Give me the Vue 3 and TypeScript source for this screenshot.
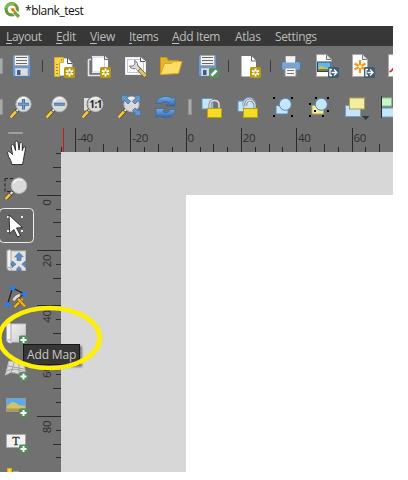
<script setup lang="ts">
interface MenuEntry {
  key: string
  rest: string
  width: number
  mnemonic: boolean
}

interface Tick {
  pos: number
  size: number
}

const menu: MenuEntry[] = [
  { key: 'L', rest: 'ayout', width: 36, mnemonic: true },
  { key: 'E', rest: 'dit', width: 20, mnemonic: true },
  { key: 'V', rest: 'iew', width: 25, mnemonic: true },
  { key: 'I', rest: 'tems', width: 29, mnemonic: true },
  { key: 'A', rest: 'dd Item', width: 49, mnemonic: true },
  { key: 'A', rest: 'tlas', width: 26, mnemonic: false },
  { key: 'S', rest: 'ettings', width: 42, mnemonic: false },
]

const major = 55.3
const step = major / 4

/* Ticks every 5 mm; long every 20 mm, medium every 10 mm. */
function ticks(zero: number, from: number, to: number): Tick[] {
  const list: Tick[] = []
  for (let i = from; i <= to; i++) {
    const size = i % 4 === 0 ? 24 : i % 2 === 0 ? 8 : 5
    list.push({ pos: Math.floor(zero + i * step + 0.2) + 0.5, size })
  }
  return list
}

const topTicks = ticks(186, -9, 14)
const leftTicks = ticks(43, -3, 19)
const topLabels = [-40, -20, 0, 20, 40, 60].map((v) => ({ v, pos: 187.5 + (v / 20) * major }))
const leftLabels = [0, 20, 40, 60, 80].map((v) => ({ v, pos: 47.5 + (v / 20) * major }))
</script>

<template>
  <div class="window">
    <svg class="defs" width="0" height="0">
      <defs>
        <g id="gold">
          <rect x="18" y="19" width="11" height="11" rx="1.5" fill="#b99a0c" />
          <path d="M23.5 20.5v8M20 22.5l7 4M20 26.5l7-4" stroke="#fff" stroke-width="1.9" />
          <circle cx="23.5" cy="24.5" r="1.2" fill="#b99a0c" />
        </g>
        <g id="plus">
          <rect x="19" y="22" width="9" height="9" rx="1.5" fill="#558a5c" />
          <path d="M23.5 23.5v6M20.5 26.5h6" stroke="#fff" stroke-width="2" />
        </g>
        <g id="export">
          <rect x="20" y="19" width="11" height="11" rx="1.5" fill="#3e5c73" />
          <path d="M24 21.500h-2v6h2M23.500 24.500h5M26 21.500l3 3-3 3" fill="none" stroke="#fff" stroke-width="1.300" />
        </g>
        <g id="disk">
          <path d="M9.500 7.500h18v21H11l-1.500-1.500z" fill="#6e98c9" stroke="#54789f" />
          <rect x="11.500" y="7.500" width="14" height="10" fill="#f2f2f2" stroke="#a3a3a3" stroke-width=".8" />
          <path d="M13 9.500h11M13 12.500h11M13 15.500h11" stroke="#696969" />
          <rect x="12.500" y="20.500" width="12" height="7" fill="#dedede" stroke="#bfcbd9" />
          <rect x="14" y="22" width="3.500" height="5" fill="#3b5f8b" />
        </g>
        <g id="page">
          <path d="M8.500 6.500h10l5 5V28.500h-15z" fill="#fff" stroke="#aaa" />
          <path d="M18.500 7v4.500h4.500" fill="#e2e2e2" stroke="#777" />
        </g>
        <g id="lens">
          <path d="M6.500 28.500l7.500-8" stroke="#4a4330" stroke-width="4" />
          <path d="M6.500 28.500l5.500-6" stroke="#f4c63d" stroke-width="2.600" />
          <path d="M12.500 22l2-2" stroke="#e5e5e5" stroke-width="2" />
          <circle cx="19.500" cy="15.200" r="7.600" fill="#dadada" stroke="#b4b4b4" />
          <path d="M14 13a6 6 0 0 1 9-3" stroke="#f0f0f0" fill="none" stroke-width="2" />
        </g>
        <linearGradient id="blue" x1="0" y1="0" x2="0" y2="1">
          <stop offset="0" stop-color="#78ade7" />
          <stop offset="1" stop-color="#3267ae" />
        </linearGradient>
        <linearGradient id="fade" x1="0" y1="0" x2="1" y2="1">
          <stop offset="0" stop-color="#f3f3f3" />
          <stop offset="1" stop-color="#c9c9c9" />
        </linearGradient>
      </defs>
    </svg>

    <header class="title">
      <svg class="logo" viewBox="0 0 17 17">
        <circle cx="7.700" cy="7.300" r="5.600" fill="none" stroke="#659b35" stroke-width="3.200" />
        <path d="M2.200 6.200a5.600 5.600 0 0 1 8.500-3.600" fill="none" stroke="#83b84e" stroke-width="3" />
        <path d="M8 7.500l6.700 6.700" stroke="#fff" stroke-width="5" />
        <path d="M10 10l5 4.800" stroke="#70a83b" stroke-width="3.200" />
        <path d="M6.500 6.200h3.500l2 4.300-4-1z" fill="#ee7913" />
      </svg>
      <span>*blank_test</span>
    </header>

    <nav class="menu">
      <span v-for="item in menu" :key="item.rest" class="entry" :style="{ width: item.width + 'px' }"><span :class="{ key: item.mnemonic }">{{ item.key }}</span>{{ item.rest }}</span>
    </nav>

    <div class="bar">
      <i class="edge"></i>
      <svg class="icon" viewBox="0 0 36 36"><use href="#disk" /></svg>
      <i class="sep first"></i>
      <svg class="icon" viewBox="0 0 36 36">
        <path d="M9 10.500h12l5 5V27.500H9z" fill="#fff" stroke="#b9c5e1" />
        <path d="M21.500 10v5.500H26" fill="#fff" stroke="#555" />
        <path d="M8.500 9.500h9v5h-4v14h-5z" fill="#f6d34e" stroke="#d8ad22" />
        <path d="M10 16.500h2M10 19.500h2M10 22.500h2M10 25.500h2M15.500 11v2" stroke="#ad8b20" />
        <use href="#gold" />
      </svg>
      <svg class="icon" viewBox="0 0 36 36">
        <path d="M6.500 11.500H9M6.500 11.500v16H20" fill="none" stroke="#e6e6e6" stroke-width="1.600" />
        <path d="M9.500 7.500h13l4 4v14h-17z" fill="#fff" stroke="#777" />
        <path d="M10.500 9h12v15h-12z" fill="#fff" stroke="#c2cceb" />
        <path d="M22.500 7.500v4h4" fill="#eee" stroke="#666" />
        <use href="#gold" />
      </svg>
      <svg class="icon" viewBox="0 0 36 36">
        <path d="M7.500 9.500h15l5 4v13h-20z" fill="#fff" stroke="#eee" />
        <path d="M9.500 11.500h12l4 3v10h-16z" fill="none" stroke="#b9c5e8" />
        <path d="M22.500 9.500v4h4.500" fill="#fff" stroke="#555" />
        <path d="M17 17l5 5.500" stroke="#777" stroke-width="4.500" />
        <path d="M16.500 12.500a4.200 4.200 0 1 1-5 5.500l3.500 0 2-2z" fill="#ddd" stroke="#777" />
        <path d="M16.500 17l5 5.500" stroke="#ddd" stroke-width="2.800" />
        <path d="M21 21.500l7 7" stroke="#7d6c39" stroke-width="4.400" />
        <path d="M21.500 22l6 6" stroke="#e0c565" stroke-width="2.800" />
      </svg>
      <svg class="icon" viewBox="0 0 36 36">
        <path d="M6.500 26V9.500h6l2 3h10v4" fill="#e2b52a" stroke="#c99717" />
        <path d="M6.500 26.500l4-11h7l2-2h8.500l-3.500 12z" fill="#fddc67" stroke="#d8a826" />
      </svg>
      <svg class="icon" viewBox="0 0 36 36">
        <use href="#disk" x="-1" />
        <rect x="19" y="20" width="10" height="10" rx="1.500" fill="#568c5f" />
        <path d="M21.500 27.500l5-5" stroke="#fff" stroke-width="2.600" />
      </svg>
      <i class="sep second"></i>
      <svg class="icon" viewBox="0 0 36 36">
        <path d="M9.500 8h10l4.500 5v15.500H9.500z" fill="#fff" />
        <path d="M19.500 8v5H24" fill="#fff" stroke="#666" />
        <use href="#gold" />
      </svg>
      <i class="sep third"></i>
      <svg class="icon" viewBox="0 0 36 36">
        <rect x="14" y="8.500" width="9" height="7" fill="#f5f5f5" stroke="#c5c5c5" />
        <rect x="9.500" y="13.500" width="19" height="9" rx="2.500" fill="#7ba3d1" stroke="#4f759f" />
        <rect x="14" y="8.500" width="9" height="6" fill="#f3f3f3" />
        <path d="M13 20h11v8.500H13z" fill="#f4f4f4" stroke="#959595" />
        <path d="M15 22.500h7M15 25.500h7" stroke="#777" />
      </svg>
      <svg class="icon" viewBox="0 0 36 36">
        <use href="#page" />
        <rect x="9.500" y="14" width="13.500" height="9.500" fill="#5fb6ee" stroke="#334553" />
        <path d="M10 21q2.500-5 5-2.500 4 2 7.500 1.500v3H10z" fill="#d4bd5b" />
        <path d="M10 22h12.500" stroke="#477746" stroke-width="1.500" />
        <use href="#export" />
      </svg>
      <svg class="icon" viewBox="0 0 36 36">
        <use href="#page" />
        <path d="M16 12v13M10.500 15.500l11 6M10.500 21.500l11-6" stroke="#f59a18" stroke-width="2.200" />
        <circle cx="16" cy="18.500" r="1.500" fill="#fff" />
        <use href="#export" />
      </svg>
      <svg class="icon" viewBox="0 0 36 36">
        <use href="#page" />
        <path d="M9.500 24q3-1.500 4-4" fill="none" stroke="#e02b28" stroke-width="1.800" />
      </svg>
    </div>

    <div class="bar">
      <i class="edge wide"></i>
      <svg class="icon" viewBox="0 0 36 36">
        <use href="#lens" />
        <path d="M19.500 10v10.500M14.200 15.200h10.600" stroke="#416b9c" stroke-width="3" />
        <path d="M19.500 10.500v9.500M14.700 15.200h9.600" stroke="#6e9ed0" stroke-width="1.400" />
      </svg>
      <svg class="icon" viewBox="0 0 36 36">
        <use href="#lens" />
        <path d="M14.200 15.200h10.600" stroke="#416b9c" stroke-width="3" />
        <path d="M14.700 15.200h9.600" stroke="#6e9ed0" stroke-width="1.400" />
      </svg>
      <svg class="icon" viewBox="0 0 36 36">
        <rect x="8" y="9" width="12" height="12.500" fill="#dcdcdc" />
        <use href="#lens" />
        <circle cx="19.500" cy="15.200" r="8.500" fill="none" stroke="#707070" />
        <text x="19.600" y="19" class="ratio">1:1</text>
      </svg>
      <svg class="icon" viewBox="0 0 36 36">
        <use href="#lens" />
        <path d="M9.500 6.500h7l-2 2 4 4-2.500 2.500-4-4-2.500 2.500zM28.500 6.500v7l-2-2-3.500 3.500-2.500-2.500 3.500-4-2-2zM28.500 26.500h-7l2-2-3-3 2.500-2.500 3.500 3 2-2z" fill="#6796ca" stroke="#49719f" stroke-width=".8" />
      </svg>
      <svg class="icon" viewBox="0 0 36 36">
        <path d="M7.500 14.500Q10 7.500 18 7.500q4 0 6.500 2l2.500-1.500v9h-9l3-3q-5-3-8 .5z" fill="url(#blue)" stroke="#3266a4" stroke-width=".7" />
        <path d="M27.500 20.500Q26 28.500 17.500 28.500q-4 0-6.500-2l-3 2v-9h9.500l-3 3q5 3 8-2z" fill="url(#blue)" stroke="#3266a4" stroke-width=".7" />
      </svg>
      <i class="grip"></i>
      <svg class="icon" viewBox="0 0 36 36">
        <rect x="8" y="9.500" width="11" height="10.500" fill="#c4e5fb" stroke="#5c96bb" />
        <path d="M16 20v-4q0-4.500 4.500-4.500t4.500 4.500v4" fill="none" stroke="#7a7a7a" stroke-width="3" />
        <path d="M16 20v-4q0-4.500 4.500-4.500t4.500 4.500v4" fill="none" stroke="#ddd" stroke-width="1.500" />
        <rect x="13.500" y="19.500" width="14" height="9" fill="#f3dc23" stroke="#bca114" />
      </svg>
      <svg class="icon" viewBox="0 0 36 36">
        <rect x="8" y="12" width="11" height="10.500" fill="#c4e5fb" stroke="#5c96bb" />
        <circle cx="19.300" cy="15" r="6.500" fill="#c4e5fb" stroke="#73a2c1" />
        <path d="M16 17q-1-5 3.500-6 4.500 0 5.500 5v4" fill="none" stroke="#777" stroke-width="2.800" />
        <path d="M16 17q-1-5 3.500-6 4.500 0 5.500 5v4" fill="none" stroke="#ddd" stroke-width="1.300" />
        <rect x="13.500" y="19.500" width="14" height="9" fill="#f3dc23" stroke="#bca114" />
      </svg>
      <svg class="icon" viewBox="0 0 36 36">
        <path d="M10 16.500h12v8.500H10z" fill="#c4e5fb" stroke="#5488aa" />
        <circle cx="19.300" cy="15.300" r="6" fill="#c4e5fb" stroke="#5488aa" />
        <path d="M7 8h2v2H7zM25 8h2v2h-2zM7 26h2v2H7zM25 26h2v2h-2z" />
      </svg>
      <svg class="icon" viewBox="0 0 36 36">
        <path d="M10 16.500h11.500v8.500H10z" fill="#f2ee9b" stroke="#b2a85b" />
        <circle cx="19.300" cy="15.300" r="6" fill="#c4e5fb" stroke="#5488aa" />
        <path d="M13 8h2v2h-2zM25 8h2v2h-2zM25 21h2v2h-2zM12 21h2v2h-2zM7 14h2v2H7zM7 26h2v2H7zM20 26h2v2h-2z" />
      </svg>
      <svg class="icon" viewBox="0 0 36 36">
        <rect x="7.500" y="16.500" width="15" height="11" fill="#c4e5fb" stroke="#719fbd" />
        <rect x="11.500" y="9" width="15" height="11" fill="#f2ee9b" stroke="#a99f5b" />
        <path d="M24 27h7.500l-3.700 4z" fill="#363636" />
      </svg>
      <svg class="icon" viewBox="0 0 36 36">
        <rect x="7.500" y="9" width="10" height="8" fill="#c7f7c8" stroke="#91bd91" />
        <rect x="7.500" y="19" width="16" height="9" fill="#c4e5fb" stroke="#6d9ebd" />
        <path d="M7.500 7v22" stroke="#292929" />
      </svg>
    </div>

    <div class="workspace">
      <aside class="tools">
        <i class="handle"></i>
        <svg class="tool" viewBox="0 0 34 36">
          <path d="M12 30.500Q11 26 8.500 22.500L7.500 18.500q1-2 3 0l2 2-1.500-9q1.500-2 3 0l1.500 5-.5-8.500q1.500-2 3 0l1 8 .8-7q1.500-1.500 2.500.5v7l1.200-3.500q2-1 2 1-.5 4-1.500 8.500-.5 4-1.500 8z" fill="#fff" stroke="#242424" stroke-width=".9" />
        </svg>
        <svg class="tool" viewBox="0 0 34 36">
          <path d="M5 8.500h13M5 8.500v13h10" fill="none" stroke="#222" stroke-dasharray="3 2" />
          <path d="M5.500 29l7-7" stroke="#51482f" stroke-width="4" />
          <path d="M5.500 29l4.500-4.700" stroke="#f4c63d" stroke-width="2.600" />
          <path d="M10.500 24l2-2" stroke="#e5e5e5" stroke-width="2" />
          <circle cx="19" cy="15.700" r="7.800" fill="#dadada" stroke="#b4b4b4" />
          <path d="M13.500 13.500a6 6 0 0 1 9-3" stroke="#eee" fill="none" stroke-width="2" />
        </svg>
        <svg class="tool" viewBox="0 0 34 36">
          <rect x="-.5" y="2.500" width="34" height="34" rx="4" fill="#686868" stroke="#ededed" />
          <path d="M7 10h2v2H7zM21 10h2v2h-2zM7 24h2v2H7zM21 24h2v2h-2z" fill="#eee" />
          <path d="M9 9l13.500 12.500-6 .5 4 7.500-3 1.500-3.700-7.500-4 4z" fill="#fff" stroke="#222" stroke-width=".9" />
        </svg>
        <svg class="tool" viewBox="0 0 34 36">
          <rect x="10.500" y="9" width="15" height="19.500" fill="#e3e3e3" stroke="#bbb" />
          <path d="M7 8.500q3-1.500 4 0V26q-2-1.500-4 0z" fill="#f2f2f2" stroke="#aaa" />
          <path d="M7 26q2-2 4 .5l1 2H9q-2-1-2-2.500" fill="#ddd" stroke="#aaa" stroke-width=".7" />
          <path d="M19 10.500l4.300 4.300H21v3.700h-4v-3.700h-2.300zM12 19l4 3.200-4 3.300v-2.300h-1v-2h1zM25.500 19l-3.700 3.200 3.700 3.300zM16.800 28.500v-1.800l2.200-2.200 2.200 2.200v1.800z" fill="#5b8ec1" stroke="#3b6795" stroke-width=".6" />
        </svg>
        <svg class="tool" viewBox="0 0 34 36">
          <path d="M7.500 26.500l5-16.500 12 6-10 6" fill="none" stroke="#242424" stroke-width="1.300" />
          <path d="M14.500 29l8-8" stroke="#7b5d10" stroke-width="3.600" />
          <path d="M14.500 29l8-8" stroke="#f2bd32" stroke-width="2.200" />
          <path d="M17.500 20.500l8 8.500" stroke="#8f6714" stroke-width="3.800" />
          <path d="M18 21l7 7.500" stroke="#eeb122" stroke-width="2.200" />
          <path d="M13.500 22.500q2-4 6.500-5.500" fill="none" stroke="#ddd" stroke-width="2.500" />
          <g fill="#287cf0"><circle cx="12.500" cy="10" r="2.500" /><circle cx="24.500" cy="16" r="2.500" /><circle cx="7.500" cy="26.500" r="2.500" /></g>
        </svg>
        <svg class="tool" viewBox="0 0 34 36">
          <rect x="10" y="10" width="15.500" height="18" fill="url(#fade)" stroke="#c4c4c4" />
          <path d="M6.500 9.500q3-1.500 4.500 0v17q-2.500-1.500-4.500 0z" fill="#f2f2f2" stroke="#aaa" />
          <path d="M6.500 26.500q2-2 4.500.5l1 2H9q-2-1-2.500-2.500" fill="#eee" stroke="#aaa" stroke-width=".7" />
          <use href="#plus" y="-.5" />
        </svg>
        <svg class="tool" viewBox="0 0 34 36">
          <path d="M9 11l15 3 1.500 10q-6 1-10-1-5-2-10 2z" fill="#dcdcdc" stroke="#bcbcbc" />
          <path d="M8 16l16 3M7 21q6-4 18 1M14 13l-3 10M19 14v10" fill="none" stroke="#999" stroke-width=".9" />
          <use href="#plus" />
        </svg>
        <svg class="tool" viewBox="0 0 34 36">
          <rect x="6.500" y="12.500" width="19" height="13" fill="#55adf0" stroke="#9b9b9b" />
          <path d="M7 20l5-4q4 0 7 3l6 1v5H7z" fill="#d3c06b" />
          <path d="M7 22.500h18V25H7z" fill="#b39b3d" />
          <use href="#plus" y=".5" />
        </svg>
        <svg class="tool" viewBox="0 0 34 36">
          <rect x="6.500" y="12.500" width="19" height="13" fill="#f1f1f1" stroke="#a7a7a7" />
          <text x="16" y="23" class="letter">T</text>
          <use href="#plus" y=".5" />
        </svg>
        <svg class="tool" viewBox="0 0 34 36">
          <rect x="7.500" y="10.500" width="4" height="14" fill="#ffd519" stroke="#e4a916" />
          <rect x="13" y="13" width="6" height="12" fill="#a5a5a5" />
        </svg>
      </aside>

      <svg class="ruler-top" viewBox="61 128 332 24">
        <path v-for="t in topTicks" :key="t.pos" :d="`M${t.pos} 152v-${t.size}`" class="tick" />
        <path d="M63.500 128v24" stroke="#e01010" />
        <text v-for="l in topLabels" :key="l.v" :x="l.pos" y="142" class="num">{{ l.v }}</text>
      </svg>
      <svg class="ruler-left" viewBox="0 0 24 343">
        <path v-for="t in leftTicks" :key="t.pos" :d="`M24 ${t.pos}h-${t.size}`" class="tick" />
        <text v-for="l in leftLabels" :key="l.v" class="num upright" :transform="`translate(14 ${l.pos}) rotate(-90)`">{{ l.v }}</text>
      </svg>
      <main class="canvas">
        <div class="paper"></div>
      </main>
    </div>

    <div class="tooltip">Add Map</div>
    <svg class="marker" viewBox="0 0 104 68">
      <ellipse cx="49.500" cy="34" rx="50.200" ry="30" />
    </svg>
  </div>
</template>

<style>
body {
  margin: 0;
  background: #fff;
}
</style>

<style scoped>
.window {
  position: relative;
  width: 393px;
  height: 472px;
  overflow: hidden;
  display: flex;
  flex-direction: column;
  background: #717171;
  font-family: "Open Sans", "Noto Sans", sans-serif;
}
.defs {
  position: absolute;
}
.title {
  flex: none;
  height: 26px;
  display: flex;
  align-items: flex-start;
  gap: 4px;
  padding-left: 4px;
  background: #fff;
  color: #111;
  font-size: 12px;
  line-height: 22px;
  letter-spacing: -0.48px;
}
.logo {
  width: 17px;
  height: 17px;
  margin-top: 2px;
}
.menu {
  flex: none;
  height: 20px;
  display: flex;
  gap: 14px;
  padding-left: 6px;
  background: #373737;
  color: #bcbcbc;
  font-size: 12px;
  line-height: 22px;
  letter-spacing: -0.35px;
  white-space: nowrap;
}
.entry {
  flex: none;
}
.key {
  text-decoration: underline;
  text-underline-offset: 2px;
  text-decoration-thickness: 1px;
}
.bar {
  flex: none;
  box-sizing: border-box;
  height: 41px;
  padding: 2px 0 3px;
  display: flex;
  align-items: center;
}
.icon {
  flex: none;
  width: 36px;
  height: 36px;
}
.edge {
  flex: none;
  width: 2px;
  height: 14px;
  border: 1px solid #929292;
  border-left: 0;
  background: #a9a9a9;
}
.edge.wide {
  margin-right: 1px;
}
.sep {
  flex: none;
  width: 1px;
  height: 12px;
  background: #3b3b3b;
}
.first {
  margin: 0 3px;
}
.second {
  margin: 0 3px 0 2px;
}
.third {
  margin: 0 1px 0 2px;
}
.grip {
  flex: none;
  width: 2px;
  height: 14px;
  margin: 0 2px 0 4px;
  border: 1px solid #929292;
  background: #acacac;
}
.workspace {
  flex: 1;
  min-height: 0;
  display: grid;
  grid-template-columns: 37px 24px 332px;
  grid-template-rows: 24px 320px;
}
.tools {
  grid-row: 1 / 3;
  display: flex;
  flex-direction: column;
  padding-top: 4px;
}
.handle {
  flex: none;
  width: 15px;
  height: 2px;
  margin-left: 8px;
  background: #a0a0a0;
  border-radius: 1px;
}
.tool {
  flex: none;
  width: 34px;
  height: 36px;
  overflow: visible;
}
.ruler-top {
  grid-column: 3;
  grid-row: 1;
  width: 332px;
  height: 24px;
}
.ruler-left {
  grid-column: 2;
  grid-row: 2;
  width: 24px;
  height: 343px;
}
.tick {
  stroke: #2a2a2a;
  stroke-width: 1;
  fill: none;
}
.num {
  font-size: 11.5px;
  fill: #2e2e2e;
  letter-spacing: -0.3px;
}
.upright {
  text-anchor: end;
}
.ratio {
  font-size: 10px;
  font-weight: 700;
  text-anchor: middle;
  fill: #292929;
  letter-spacing: -0.5px;
}
.letter {
  font-family: "Liberation Serif", serif;
  font-size: 12px;
  text-anchor: middle;
  fill: #333;
  stroke: #333;
  stroke-width: 0.3px;
}
.canvas {
  grid-column: 3;
  grid-row: 2;
  padding: 43px 0 0 125px;
  background: #d7d7d7;
}
.paper {
  height: 277px;
  background: #fff;
}
.tooltip {
  position: absolute;
  left: 23px;
  top: 344px;
  box-sizing: border-box;
  width: 57px;
  height: 21px;
  border: 1px solid #171717;
  background: #373737;
  box-shadow: 2px 2px 2px rgba(0, 0, 0, 0.45);
  color: #c8c8c8;
  font-size: 12px;
  line-height: 20px;
  letter-spacing: -0.15px;
  padding-left: 3px;
  white-space: nowrap;
}
.marker {
  position: absolute;
  left: 0;
  top: 304px;
  width: 104px;
  height: 68px;
}
.marker ellipse {
  fill: none;
  stroke: #fff000;
  stroke-width: 4.5px;
}
</style>
